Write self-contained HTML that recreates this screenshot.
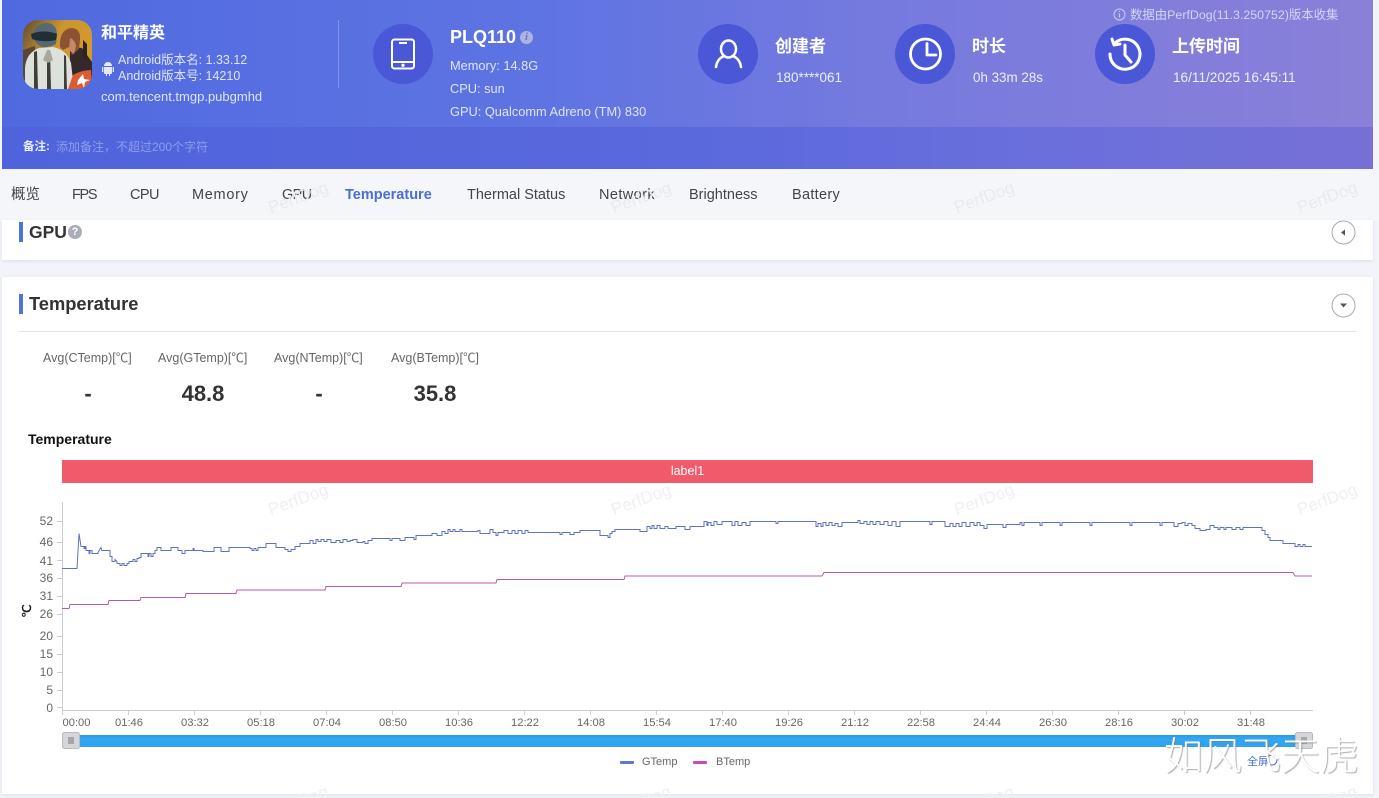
<!DOCTYPE html>
<html lang="zh"><head><meta charset="utf-8"><title>PerfDog</title>
<style>
html,body{margin:0;padding:0;width:1379px;height:798px;overflow:hidden}
body{background:#f2f4fa;font-family:"Liberation Sans","Noto Sans CJK SC",sans-serif;color:#333}
#root{position:relative;width:1379px;height:798px;overflow:hidden;contain:paint}
.t{position:absolute;white-space:nowrap;line-height:1}
.w{color:#fff}
.c{position:absolute;width:60px;height:60px;border-radius:50%;background:#4a57d6;top:24px}
.c svg{position:absolute;left:0;top:0}
.tab{position:absolute;top:188px;font-size:14.5px;line-height:1;color:#444;white-space:nowrap}
.card{position:absolute;left:2px;width:1371px;background:#fff;box-shadow:0 1px 3px rgba(120,130,170,.18)}
.bar{position:absolute;left:19px;width:4px;height:20px;background:#4f74d8}
.avgl{position:absolute;top:352px;font-size:12.5px;line-height:1;color:#666;white-space:nowrap;text-align:center}
.avgv{position:absolute;top:383px;font-size:22px;font-weight:bold;line-height:1;color:#333;text-align:center}
.wm{position:absolute;font-size:17px;line-height:1;color:#eef0f3;transform:rotate(-20deg);white-space:nowrap;z-index:5}
</style></head><body><div id="root">

<!-- header -->
<div style="position:absolute;left:2px;top:0;width:1371px;height:127px;background:linear-gradient(90deg,#4f6ae0 0%,#5f74e2 40%,#767ade 65%,#8a80d8 100%)"></div>
<div style="position:absolute;left:2px;top:127px;width:1371px;height:42px;background:linear-gradient(90deg,#4f63dc 0%,#5a69dc 50%,#6a6fdc 75%,#7670d6 100%)"></div>

<!-- game icon -->
<svg style="position:absolute;left:23px;top:20px" width="69" height="69" viewBox="0 0 69 69">
<defs><clipPath id="ic"><rect width="69" height="69" rx="15"/></clipPath>
<linearGradient id="sky" x1="0" y1="0" x2="1" y2=".6"><stop offset="0" stop-color="#5e4a33"/><stop offset=".45" stop-color="#c9962f"/><stop offset="1" stop-color="#d79a2c"/></linearGradient></defs>
<g clip-path="url(#ic)">
<rect width="69" height="69" fill="url(#sky)"/>
<path d="M0 30l12-4v43H0z" fill="#5a4733"/>
<path d="M47 27l12 1 10 14v20l-22 0z" fill="#33282a"/>
<path d="M37 27q-1-17 11-19 10 0 9 12l-1 9-7 6-3-8-6 3z" fill="#8c5235"/>
<path d="M47 18q5 2 6 8l-2 8-5-4z" fill="#c58a65"/>
<path d="M60 20l4 4v16l-4-2z" fill="#2a2320"/>
<path d="M2 69V48q1-15 14-20l14-1q14 3 18 16l3 26z" fill="#dde1dc"/>
<path d="M11 32l3-1 1 38h-4zM24 30h3l1 39h-4zM41 35l2 1 1 33h-3z" fill="#3f3f38"/>
<path d="M27 30l3 10-5 3-5-3 4-10z" fill="#a7a99f"/>
<path d="M9 15q4-12 15-12 10 1 10 12l-1 9q-7 4-14 3-7-3-10-12z" fill="#566872"/>
<path d="M8 14q13-5 26 0l-1 6q-12 3-24-1z" fill="#222e33"/>
<path d="M45 69l5-14q9-5 18-5l1 19z" fill="#dd5b33"/>
<path d="M55 60l5-6 1 5 6 1-5 2-1 6-2-5-5 2z" fill="#fff"/>
</g></svg>

<div class="t w" style="left:101px;top:26px;font-size:16px;font-weight:bold">和平精英</div>
<svg style="position:absolute;left:101px;top:61px" width="14" height="16" viewBox="0 0 14 16"><path d="M3 5a4 4 0 0 1 8 0zM3 6h8v6a1 1 0 0 1-1 1H9v2H8v-2H6v2H5v-2H4a1 1 0 0 1-1-1zM1 6h1.300v5H1zM11.700 6H13v5h-1.300z" fill="#e4e8fb"/></svg>
<div class="t" style="left:118px;top:54px;font-size:12.5px;color:#dfe4fb">Android版本名: 1.33.12</div>
<div class="t" style="left:118px;top:70px;font-size:12.5px;color:#dfe4fb">Android版本号: 14210</div>
<div class="t" style="left:101px;top:90px;font-size:13px;color:#dfe4fb">com.tencent.tmgp.pubgmhd</div>
<div style="position:absolute;left:338px;top:20px;width:1px;height:68px;background:#8594e8"></div>

<div class="c" style="left:373px"><svg width="60" height="60" viewBox="0 0 60 60" fill="none" stroke="#fff" stroke-width="2"><rect x="19" y="15.500" width="22" height="29" rx="2.500"/><path d="M19 38h22M26 19h8"/><circle cx="30" cy="41.300" r=".7" fill="#fff"/></svg></div>
<div class="t w" style="left:450px;top:28px;font-size:18px;font-weight:bold">PLQ110</div>
<div style="position:absolute;left:520px;top:31px;width:13px;height:13px;border-radius:50%;background:#aeb2e0;color:#5e6fd8;font:italic bold 10px/13px 'Liberation Serif',serif;text-align:center">i</div>
<div class="t" style="left:450px;top:60px;font-size:12.8px;color:#dfe4fb">Memory: 14.8G</div>
<div class="t" style="left:450px;top:83px;font-size:12.8px;color:#dfe4fb">CPU: sun</div>
<div class="t" style="left:450px;top:106px;font-size:12.8px;color:#dfe4fb">GPU: Qualcomm Adreno (TM) 830</div>

<div class="c" style="left:698px"><svg width="60" height="60" viewBox="0 0 60 60" fill="none" stroke="#fff" stroke-width="2.500" stroke-linecap="round"><ellipse cx="30.500" cy="25" rx="7.500" ry="8.500"/><path d="M18 43q1-8 8-11M43 43q-1-8-8-11"/></svg></div>
<div class="t w" style="left:775px;top:38px;font-size:17px;font-weight:bold">创建者</div>
<div class="t" style="left:776px;top:71px;font-size:13.5px;color:#eceefc">180****061</div>

<div class="c" style="left:895px"><svg width="60" height="60" viewBox="0 0 60 60" fill="none" stroke="#fff" stroke-width="2.800" stroke-linecap="round" stroke-linejoin="round"><circle cx="30.500" cy="30" r="15"/><path d="M32 19.500v11.500h9"/></svg></div>
<div class="t w" style="left:972px;top:38px;font-size:17px;font-weight:bold">时长</div>
<div class="t" style="left:973px;top:71px;font-size:13.4px;color:#eceefc">0h 33m 28s</div>

<div class="c" style="left:1095px"><svg width="60" height="60" viewBox="0 0 60 60" fill="none" stroke="#fff" stroke-width="3" stroke-linecap="round" stroke-linejoin="round"><path d="M19 20a15 15 0 1 1-4 10"/><path d="M17 15l2 6 6-1"/><path d="M30 21v10l6 7"/></svg></div>
<div class="t w" style="left:1172px;top:38px;font-size:17px;font-weight:bold">上传时间</div>
<div class="t" style="left:1173px;top:71px;font-size:13.6px;color:#eceefc">16/11/2025 16:45:11</div>

<svg style="position:absolute;left:1113px;top:8px" width="13" height="13" viewBox="0 0 13 13" fill="none" stroke="#c8cdf3"><circle cx="6.500" cy="6.500" r="5.500"/><path d="M6.500 5.500v4M6.500 3v1"/></svg>
<div class="t" style="left:1130px;top:9px;font-size:12.4px;color:#d2d6f5">数据由PerfDog(11.3.250752)版本收集</div>

<div class="t" style="left:23px;top:142px;font-size:11.5px;font-weight:bold;color:#e8ebfc">备注:</div>
<div class="t" style="left:56px;top:141px;font-size:12px;color:#8d9dee">添加备注，不超过200个字符</div>

<!-- tabs -->
<div style="position:absolute;left:0;top:169px;width:1379px;height:51px;background:#f5f6fa"></div>
<div class="tab" style="left:11px">概览</div>
<div class="tab" style="left:72px;letter-spacing:-1.300px">FPS</div>
<div class="tab" style="left:130px;letter-spacing:-.6px">CPU</div>
<div class="tab" style="left:192px;letter-spacing:.7px">Memory</div>
<div class="tab" style="left:282px;letter-spacing:-.6px">GPU</div>
<div class="tab" style="left:345px;color:#4a6fd2;font-weight:bold">Temperature</div>
<div class="tab" style="left:467px">Thermal Status</div>
<div class="tab" style="left:599px;letter-spacing:.4px">Network</div>
<div class="tab" style="left:689px">Brightness</div>
<div class="tab" style="left:792px;letter-spacing:.3px">Battery</div>

<!-- GPU card -->
<div class="card" style="top:220px;height:40px"></div>
<div class="bar" style="top:222px"></div>
<div class="t" style="left:29px;top:224px;font-size:17.5px;font-weight:bold;color:#333">GPU</div>
<div style="position:absolute;left:68px;top:225px;width:14px;height:14px;border-radius:50%;background:#a8adb8;color:#fff;font:bold 11px/14px 'Liberation Sans',sans-serif;text-align:center">?</div>
<svg style="position:absolute;left:1331px;top:220px" width="25" height="25" viewBox="0 0 25 25"><circle cx="12.500" cy="12.500" r="11.500" fill="#fff" stroke="#aaa"/><path d="M10 12.500l4-3v6z" fill="#555"/></svg>

<!-- Temperature card -->
<div class="card" style="top:277px;height:517px"></div>
<div class="bar" style="top:294px"></div>
<div class="t" style="left:29px;top:295px;font-size:18.300px;font-weight:bold;color:#333">Temperature</div>
<svg style="position:absolute;left:1331px;top:293px" width="25" height="25" viewBox="0 0 25 25"><circle cx="12.500" cy="12.500" r="11.500" fill="#fff" stroke="#aaa"/><path d="M9 10.500h7l-3.500 4z" fill="#555"/></svg>
<div style="position:absolute;left:19px;top:331px;width:1337px;height:1px;background:#e2e3e6"></div>

<div class="avgl" style="left:43px">Avg(CTemp)[℃]</div>
<div class="avgl" style="left:158px">Avg(GTemp)[℃]</div>
<div class="avgl" style="left:274px">Avg(NTemp)[℃]</div>
<div class="avgl" style="left:391px">Avg(BTemp)[℃]</div>
<div class="avgv" style="left:58px;width:60px">-</div>
<div class="avgv" style="left:173px;width:60px">48.8</div>
<div class="avgv" style="left:289px;width:60px">-</div>
<div class="avgv" style="left:405px;width:60px">35.8</div>

<div class="t" style="left:28px;top:432px;font-size:14px;font-weight:bold;color:#111">Temperature</div>
<div style="position:absolute;left:62px;top:460px;width:1251px;height:23px;background:#f05a6b;color:#fff;font-size:12.5px;line-height:23px;text-align:center">label1</div>

<!-- chart -->
<svg style="position:absolute;left:0;top:495px" width="1379" height="303" viewBox="0 495 1379 303" font-family="'Liberation Sans',sans-serif">
<g stroke="#c9ccd3" fill="none">
<path d="M62.500 502V710.500H1313"/>
<path d="M57 521.500h5M57 542.500h5M57 560.500h5M57 578.500h5M57 596.500h5M57 614.500h5M57 636.500h5M57 654.500h5M57 672.500h5M57 690.500h5M57 707.500h5"/>
<path d="M62.500 710v5M128.500 710v5M194.500 710v5M260.500 710v5M326.500 710v5M392.500 710v5M458.500 710v5M524.500 710v5M590.500 710v5M656.500 710v5M722.500 710v5M788.500 710v5M854.500 710v5M920.500 710v5M986.500 710v5M1052.500 710v5M1118.500 710v5M1184.500 710v5M1250.500 710v5"/>
</g>
<g font-size="12" fill="#666" text-anchor="end">
<text x="53" y="525">52</text><text x="53" y="546">46</text><text x="53" y="565">41</text><text x="53" y="582">36</text><text x="53" y="600">31</text><text x="53" y="618">26</text><text x="53" y="640">20</text><text x="53" y="658">15</text><text x="53" y="676">10</text><text x="53" y="694">5</text><text x="53" y="712">0</text>
</g>
<g font-size="11.200" fill="#666" text-anchor="middle">
<text x="76.500" y="726">00:00</text><text x="129" y="726">01:46</text><text x="195" y="726">03:32</text><text x="261" y="726">05:18</text><text x="327" y="726">07:04</text><text x="393" y="726">08:50</text><text x="459" y="726">10:36</text><text x="525" y="726">12:22</text><text x="591" y="726">14:08</text><text x="657" y="726">15:54</text><text x="723" y="726">17:40</text><text x="789" y="726">19:26</text><text x="855" y="726">21:12</text><text x="921" y="726">22:58</text><text x="987" y="726">24:44</text><text x="1053" y="726">26:30</text><text x="1119" y="726">28:16</text><text x="1185" y="726">30:02</text><text x="1251" y="726">31:48</text>
</g>
<text transform="translate(31,611) rotate(-90)" font-size="12" fill="#222" text-anchor="middle" font-weight="bold">℃</text>

<!-- GTemp -->
<path transform="translate(0,.5)" fill="none" stroke="#6073c2" stroke-width="1" d="M62 568H77L79 533L81 546H84V548H85V546H86V550H89V553H90V550H92V553H96V553H98V552L101 547L102 550H110V556H112V561H115V559L117 561V563H120V565H122V563H124V565H127V563H129V561H133V559H135V561H137V558H139V557H141V553H148V556H149V553H151V556H153V553H155V550H157V547H161V550H171V547H178V550H182V553H185V550H193V548H194V550H203V551H214V547H221V551H229V547H250V548H252V550H254V548H256V550H258V547H266V543H276V547H285V549H288V551H291V549H295V546H300V543H310V540H313V543H316V539H318V541H321V539H324V541H327V539H331V542H336V540H340V542H343V539H347V541H350V540H353V539H357V542H363V541H365V543H368V540H372V538H390V540H392V538H400V540H405V537H414V539H416V535H432V533H437V535H442V531H445V533H448V529H450V531H453V529H455V531H460V529H462V531H478V530H480V533H490V529H493V532H496V535H498V532H504V530H508V533H512V530H515V533H518V530H522V533H525V530H528V532H560V534H562V532H570V534H574V532H580V530H600V535H608V537H610V533H612V531H615V529H640V531H647V526H650V528H652V525H654V528H657V525H660V528H665V526H668V528H676V526H685V529H690V526H704V521H707V525H708V522H711V525H714V521H717V524H722V521H732V525H735V521H738V525H742V522H746V525H750V521H776V523H778V521H800V521H816V526H818V523H821V526H823V522H826V525H829V522H832V525H835V523H838V526H842V522H858V520H860V523H864V521H867V524H870V521H873V524H876V521H880V524H884V521H888V525H892V521H896V526H900V521H930V524H932V521H945V526H950V523H953V526H956V523H959V526H962V522H966V526H970V522H974V525H977V522H980V525H984V528H987V524H1003V527H1006V524H1020V522H1022V525H1024V522H1040V525H1042V522H1060V525H1062V522H1090V525H1092V522H1130V525H1132V522H1160V525H1162V522H1174V526H1178V523H1182V522H1185V525H1188V523H1192V525H1195V528H1200V530H1206V529H1210V525H1214V527H1218V529H1220V527H1224V529H1226V527H1232V529H1236V527H1240V529H1243V527H1262V530H1265V534H1268V537H1270V540H1283V543H1295V546H1298V544H1300V546H1303V544H1305V546H1312"/>
<!-- BTemp -->
<path transform="translate(0,.5)" fill="none" stroke="#b85aa8" stroke-width="1" d="M62 608H69L70 604H108L109 600H140L141 597H185L186 593H236L237 589.500H325L326 586H401L402 582.500H496L497 579H624L625 575.500H822L824 572H1293L1295 575.500H1312"/>

<!-- dataZoom -->
<defs><linearGradient id="dz" x1="0" y1="0" x2="0" y2="1"><stop offset="0" stop-color="#2c9ae4"/><stop offset=".3" stop-color="#33a6f0"/><stop offset="1" stop-color="#2fa4ee"/></linearGradient></defs>
<rect x="78" y="735" width="1220" height="12" fill="url(#dz)"/>
<rect x="62.500" y="732.500" width="17" height="16" rx="2" fill="#d4d6d9" stroke="#b8bbc0"/>
<path d="M69 737v7M71 737v7M73 737v7" stroke="#777"/>
<rect x="1295.500" y="732.500" width="17" height="16" rx="2" fill="#d4d6d9" stroke="#b8bbc0"/>
<path d="M1302 737v7M1304 737v7M1306 737v7" stroke="#777"/>

<!-- legend -->
<rect x="620" y="761" width="14" height="3" rx="1" fill="#6278cf"/>
<text x="642" y="765" font-size="11" fill="#666">GTemp</text>
<rect x="693" y="761" width="14" height="3" rx="1" fill="#c54bb8"/>
<text x="716" y="765" font-size="11" fill="#666">BTemp</text>
<text x="1247" y="765" font-size="11" fill="#4a6fd2" font-family="'Liberation Sans','Noto Sans CJK SC',sans-serif">全屏</text>
<circle cx="1272" cy="760" r="5" fill="none" stroke="#4a6fd2"/>
</svg>

<!-- watermarks -->
<div class="wm" style="left:267px;top:189px;color:#e9eaee">PerfDog</div>
<div class="wm" style="left:610px;top:189px;color:#e9eaee">PerfDog</div>
<div class="wm" style="left:953px;top:189px;color:#e9eaee">PerfDog</div>
<div class="wm" style="left:1296px;top:189px;color:#e9eaee">PerfDog</div>
<div class="wm" style="left:267px;top:491px">PerfDog</div>
<div class="wm" style="left:610px;top:491px">PerfDog</div>
<div class="wm" style="left:953px;top:491px">PerfDog</div>
<div class="wm" style="left:1296px;top:491px">PerfDog</div>
<div class="wm" style="left:267px;top:793px">PerfDog</div>
<div class="wm" style="left:610px;top:793px">PerfDog</div>
<div class="wm" style="left:953px;top:793px">PerfDog</div>
<div class="wm" style="left:1296px;top:793px">PerfDog</div>

<!-- overlay mark -->
<div class="t" style="left:1164px;top:735px;font-size:39px;font-weight:300;color:#fff;z-index:6;font-family:'Noto Sans CJK SC',sans-serif;text-shadow:1px 1px 1px rgba(120,120,120,.6)">如风飞天虎</div>
</div></body></html>
